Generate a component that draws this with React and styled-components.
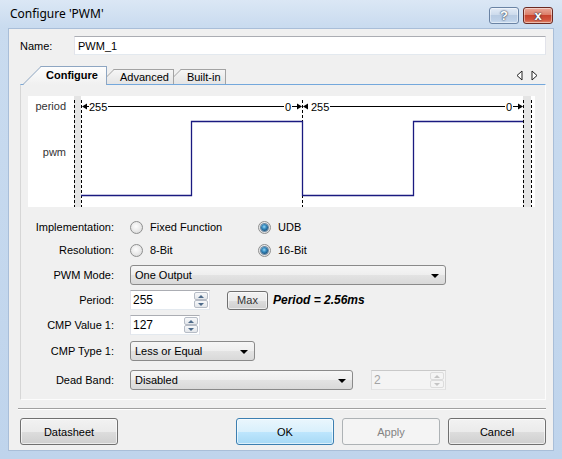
import React from 'react';
import styled, { createGlobalStyle } from 'styled-components';

const GlobalStyle = createGlobalStyle`
  html, body {
    margin: 0;
    padding: 0;
  }
  body {
    width: 562px;
    height: 459px;
    overflow: hidden;
    font-family: "Liberation Sans", Arial, sans-serif;
    font-size: 11px;
    color: #000;
  }
  * {
    box-sizing: border-box;
  }
`;

const Window = styled.div`
  width: 562px;
  height: 459px;
  display: flex;
  flex-direction: column;
  padding: 0 8px 8px;
  background: linear-gradient(to bottom, #dbe7f5 0px, #c9dbef 27px, #bfd4ec 100%);
`;

const TitleBar = styled.div`
  height: 28px;
  display: flex;
  align-items: flex-start;
  flex: none;
`;

const Title = styled.div`
  margin: 6px 0 0 2px;
  font-family: "Noto Sans", "Open Sans", sans-serif;
  font-size: 12px;
  line-height: 16px;
  color: #000;
`;

const CaptionButtons = styled.div`
  margin: 7px 1px 0 auto;
  display: flex;
  gap: 4px;
`;

const CaptionButton = styled.div`
  width: 30px;
  height: 17px;
  border-radius: 3px;
  display: flex;
  align-items: center;
  justify-content: center;
  font-family: "Liberation Sans", Arial, sans-serif;
  font-weight: 700;
  font-size: 13px;
  color: #fff;
  border: 1px solid ${p => (p.$close ? '#6b2a22' : '#6a83a4')};
  box-shadow: inset 0 0 0 1px rgba(255, 255, 255, 0.45);
  background: ${p =>
    p.$close
      ? 'linear-gradient(to bottom, #e9a99a 0%, #dc7e69 45%, #c8432d 50%, #d2563f 80%, #e08b6f 100%)'
      : 'linear-gradient(to bottom, #e3ebf6 0%, #cddbec 45%, #b8cbe2 50%, #bdd0e7 80%, #cadcf0 100%)'};
  text-shadow: 0 0 2px #2a3a50, 0 0 1px #2a3a50;
`;

const Client = styled.div`
  flex: 1;
  display: flex;
  flex-direction: column;
  background: #f0f0f0;
  border: 1px solid #a9bed8;
  padding: 7px 7px 5px 11px;
`;

const NameRow = styled.div`
  display: flex;
  align-items: center;
  height: 19px;
`;

const NameLabel = styled.div`
  width: 54px;
`;

const TextBox = styled.div`
  flex: 1;
  height: 19px;
  background: #fff;
  border: 1px solid;
  border-color: #abadb3 #e2e3ea #e3e9ef #e2e3ea;
  padding: 0 3px;
  display: flex;
  align-items: center;
  font-size: 11px;
`;

const TabStrip = styled.div`
  position: relative;
  z-index: 1;
  margin-top: 11px;
  height: 18px;
  display: flex;
  align-items: flex-end;
  padding-left: 2px;
`;

const Tab = styled.div`
  position: relative;
  height: ${p => (p.$active ? 19 : 15)}px;
  margin-left: ${p => (p.$first ? 0 : -8)}px;
  margin-bottom: ${p => (p.$active ? -1 : 0)}px;
  padding: 0 ${p => p.$pr}px ${p => (p.$active ? 1 : 0)}px ${p => (p.$active ? 24 : 21)}px;
  z-index: ${p => p.$z};
  display: flex;
  align-items: center;
  font-weight: ${p => (p.$active ? 700 : 400)};

  &::before,
  &::after {
    content: '';
    position: absolute;
    top: 0;
    bottom: 0;
    background: ${p =>
      p.$active
        ? 'linear-gradient(to bottom, #fdfdfd, #f0f0f0)'
        : 'linear-gradient(to bottom, #f6f6f6, #e4e4e4)'};
    border-top: 1px solid ${p => (p.$active ? '#8ea6c2' : '#a3a3a3')};
  }

  &::before {
    left: 0;
    width: ${p => (p.$active ? 22 : 18)}px;
    transform: skewX(-45deg);
    transform-origin: bottom left;
    border-left: 1px solid ${p => (p.$active ? '#8ea6c2' : '#a3a3a3')};
  }

  &::after {
    left: ${p => (p.$active ? 19 : 15)}px;
    right: 0;
    border-right: 1px solid ${p => (p.$active ? '#8ea6c2' : '#a3a3a3')};
  }

  span {
    position: relative;
    z-index: 1;
  }
`;

const TabArrows = styled.div`
  margin: 0 8px 0 auto;
  align-self: center;
  display: flex;
  gap: 8px;
`;

const Panel = styled.div`
  height: 316px;
  border: 1px solid;
  border-color: #74a8dc #fcfcfc #fcfcfc #d6d6d6;
  padding: 11px 10px 0 7px;
  display: flex;
  flex-direction: column;
`;

const WaveBox = styled.div`
  width: 507px;
  height: 111px;
  background: #fff;
  flex: none;
`;

const Form = styled.div`
  margin-top: 11px;
  display: flex;
  flex-direction: column;
`;

const Row = styled.div`
  display: grid;
  grid-template-columns: 86px 1fr;
  column-gap: 16px;
  align-items: center;
  height: ${p => p.$h}px;
  margin-top: ${p => p.$mt || 0}px;
`;

const Label = styled.div`
  text-align: right;
  white-space: nowrap;
`;

const Controls = styled.div`
  display: flex;
  align-items: center;
  height: 100%;
`;

const RadioOption = styled.div`
  display: flex;
  align-items: center;
  gap: 7px;
  width: ${p => p.$w}px;
`;

const RadioDot = styled.span`
  flex: none;
  width: 13px;
  height: 13px;
  border-radius: 50%;
  border: 1px solid #8e8f8f;
  background: radial-gradient(circle at 45% 40%, #fdfdfd 0%, #ececec 45%, #d2d2d2 100%);
  display: flex;
  align-items: center;
  justify-content: center;

  &::after {
    content: '';
    display: ${p => (p.$on ? 'block' : 'none')};
    width: 7px;
    height: 7px;
    border-radius: 50%;
    background: radial-gradient(circle at 45% 40%, #9ad8f3 0%, #3a8fc4 35%, #17507c 75%, #1c3d5c 100%);
    box-shadow: 0 0 0 1px #6e8aa3;
  }
`;

const Combo = styled.div`
  position: relative;
  width: ${p => p.$w}px;
  height: 20px;
  border: 1px solid #8a8a8a;
  border-radius: 3px;
  background: linear-gradient(to bottom, #f6f6f6 0%, #eeeeee 50%, #e3e3e3 51%, #d9d9d9 100%);
  padding: 0 20px 0 4px;
  display: flex;
  align-items: center;

  &::after {
    content: '';
    position: absolute;
    right: 6px;
    top: 50%;
    margin-top: -1px;
    border-left: 4px solid transparent;
    border-right: 4px solid transparent;
    border-top: 4px solid #000;
  }
`;

const SpinBox = styled.div`
  width: ${p => p.$w}px;
  height: 20px;
  display: flex;
  background: ${p => (p.$disabled ? '#f4f4f4' : '#fff')};
  border: 1px solid;
  border-color: ${p => (p.$disabled ? '#c9c9c9 #dedede #e3e3e3 #dedede' : '#abadb3 #e2e3ea #e3e9ef #e2e3ea')};
  margin-left: ${p => p.$ml || 0}px;
  color: ${p => (p.$disabled ? '#a3a3a3' : '#000')};
`;

const SpinValue = styled.div`
  flex: 1;
  padding: 1px 0 0 2px;
  line-height: 16px;
  font-size: 12px;
`;

const SpinButtons = styled.div`
  width: 15px;
  display: flex;
  flex-direction: column;
  padding: 1px 1px 1px 0;
`;

const SpinButton = styled.div`
  flex: 1;
  display: flex;
  align-items: center;
  justify-content: center;
  border: 1px solid ${p => (p.$disabled ? '#dcdcdc' : '#b6bcc6')};
  border-radius: 2px;
  background: ${p => (p.$disabled ? '#f4f4f4' : 'linear-gradient(to bottom, #f7f8fa, #e3e6ea)')};

  &::after {
    content: '';
    border-left: 3px solid transparent;
    border-right: 3px solid transparent;
    ${p =>
      p.$up
        ? `border-bottom: 3px solid ${p.$disabled ? '#c4c4c4' : '#4d6a8a'};`
        : `border-top: 3px solid ${p.$disabled ? '#c4c4c4' : '#4d6a8a'};`}
  }
`;

const SmallButton = styled.div`
  margin-left: 17px;
  width: 41px;
  height: 19px;
  border: 1px solid #707070;
  border-radius: 3px;
  background: linear-gradient(to bottom, #f2f2f2 0%, #ebebeb 50%, #dddddd 51%, #cfcfcf 100%);
  box-shadow: inset 0 0 0 1px rgba(255, 255, 255, 0.6);
  display: flex;
  align-items: center;
  justify-content: center;
  color: #333;
`;

const PeriodText = styled.div`
  margin-left: 5px;
  font-size: 12px;
  font-weight: 700;
  font-style: italic;
  white-space: nowrap;
`;

const Separator = styled.div`
  margin: 8px 0 0 -2px;
  height: 2px;
  border-top: 1px solid #a0a0a0;
  border-bottom: 1px solid #ffffff;
`;

const ButtonBar = styled.div`
  margin-top: 8px;
  display: flex;
  gap: 8px;
`;

const Button = styled.div`
  width: 98px;
  height: 27px;
  margin-left: ${p => (p.$push ? 'auto' : '0')};
  border: 1px solid ${p => (p.$primary ? '#3c7fb1' : p.$disabled ? '#adb2b5' : '#707070')};
  border-radius: 3px;
  display: flex;
  align-items: center;
  justify-content: center;
  color: ${p => (p.$disabled ? '#838383' : '#000')};
  box-shadow: inset 0 0 0 1px ${p => (p.$disabled ? 'transparent' : 'rgba(255, 255, 255, 0.6)')};
  background: ${p =>
    p.$primary
      ? 'linear-gradient(to bottom, #eaf6fd 0%, #d9f0fc 50%, #bee6fd 51%, #a7d9f5 100%)'
      : p.$disabled
      ? '#f4f4f4'
      : 'linear-gradient(to bottom, #f2f2f2 0%, #ebebeb 50%, #dddddd 51%, #cfcfcf 100%)'};
`;

const Arrow = ({ right }) => (
  <svg width="7" height="11" viewBox="0 0 7 11">
    <polygon
      points={right ? '1,1 6,5.5 1,10' : '6,1 1,5.5 6,10'}
      fill="#fff"
      stroke="#222"
      strokeWidth="1"
    />
  </svg>
);

const Waveform = () => (
  <svg width="507" height="111" viewBox="0 0 507 111" fontFamily="Liberation Sans, Arial, sans-serif" fontSize="11">
    <rect x="46" y="0" width="7" height="111" fill="#e4e4e4" />
    <rect x="495" y="0" width="8" height="111" fill="#e4e4e4" />
    <g stroke="#000" strokeWidth="1" strokeDasharray="3 2">
      <line x1="46.5" y1="4" x2="46.5" y2="111" />
      <line x1="53.5" y1="4" x2="53.5" y2="111" />
      <line x1="274.5" y1="4" x2="274.5" y2="111" />
      <line x1="495.5" y1="4" x2="495.5" y2="111" />
      <line x1="503.5" y1="4" x2="503.5" y2="111" />
    </g>
    <text x="38" y="14" textAnchor="end" fill="#333">period</text>
    <text x="38" y="60" textAnchor="end" fill="#333">pwm</text>

    <g fill="#000">
      <polygon points="54,10.5 59,7.5 59,13.5" />
      <polygon points="274,10.5 269,7.5 269,13.5" />
      <polygon points="275,10.5 280,7.5 280,13.5" />
      <polygon points="495,10.5 490,7.5 490,13.5" />
      <text x="61" y="14.5">255</text>
      <text x="260" y="14.5" textAnchor="middle">0</text>
      <text x="283" y="14.5">255</text>
      <text x="481" y="14.5" textAnchor="middle">0</text>
    </g>
    <g stroke="#000" strokeWidth="1">
      <line x1="58" y1="10.5" x2="61" y2="10.5" />
      <line x1="80" y1="10.5" x2="256" y2="10.5" />
      <line x1="264" y1="10.5" x2="269" y2="10.5" />
      <line x1="302" y1="10.5" x2="477" y2="10.5" />
      <line x1="485" y1="10.5" x2="490" y2="10.5" />
    </g>

    <path
      d="M53 99.5 H163.5 V25.5 H274.5 V99.5 H385.5 V25.5 H495"
      fill="none"
      stroke="#1a1a80"
      strokeWidth="1.3"
    />
  </svg>
);

const Spinner = ({ value, w, ml, disabled }) => (
  <SpinBox $w={w} $ml={ml} $disabled={disabled}>
    <SpinValue>{value}</SpinValue>
    <SpinButtons>
      <SpinButton $up $disabled={disabled} />
      <SpinButton $disabled={disabled} />
    </SpinButtons>
  </SpinBox>
);

const Radio = ({ label, on, w }) => (
  <RadioOption $w={w}>
    <RadioDot $on={on} />
    <span>{label}</span>
  </RadioOption>
);

export default function App() {
  return (
    <>
      <GlobalStyle />
      <Window>
        <TitleBar>
          <Title>Configure 'PWM'</Title>
          <CaptionButtons>
            <CaptionButton>?</CaptionButton>
            <CaptionButton $close>x</CaptionButton>
          </CaptionButtons>
        </TitleBar>

        <Client>
          <NameRow>
            <NameLabel>Name:</NameLabel>
            <TextBox>PWM_1</TextBox>
          </NameRow>

          <TabStrip>
            <Tab $active $first $z={3} $pr={9}>
              <span>Configure</span>
            </Tab>
            <Tab $z={2} $pr={5}>
              <span>Advanced</span>
            </Tab>
            <Tab $z={1} $pr={5}>
              <span>Built-in</span>
            </Tab>
            <TabArrows>
              <Arrow />
              <Arrow right />
            </TabArrows>
          </TabStrip>

          <Panel>
            <WaveBox>
              <Waveform />
            </WaveBox>

            <Form>
              <Row $h={18}>
                <Label>Implementation:</Label>
                <Controls>
                  <Radio label="Fixed Function" w={128} />
                  <Radio label="UDB" on />
                </Controls>
              </Row>
              <Row $h={18} $mt={5}>
                <Label>Resolution:</Label>
                <Controls>
                  <Radio label="8-Bit" w={128} />
                  <Radio label="16-Bit" on />
                </Controls>
              </Row>
              <Row $h={20} $mt={6}>
                <Label>PWM Mode:</Label>
                <Controls>
                  <Combo $w={316}>One Output</Combo>
                </Controls>
              </Row>
              <Row $h={20} $mt={5}>
                <Label>Period:</Label>
                <Controls>
                  <Spinner value="255" w={80} />
                  <SmallButton>Max</SmallButton>
                  <PeriodText>Period = 2.56ms</PeriodText>
                </Controls>
              </Row>
              <Row $h={20} $mt={5}>
                <Label>CMP Value 1:</Label>
                <Controls>
                  <Spinner value="127" w={70} />
                </Controls>
              </Row>
              <Row $h={20} $mt={6}>
                <Label>CMP Type 1:</Label>
                <Controls>
                  <Combo $w={125}>Less or Equal</Combo>
                </Controls>
              </Row>
              <Row $h={20} $mt={9}>
                <Label>Dead Band:</Label>
                <Controls>
                  <Combo $w={223}>Disabled</Combo>
                  <Spinner value="2" w={75} ml={18} disabled />
                </Controls>
              </Row>
            </Form>
          </Panel>

          <Separator />

          <ButtonBar>
            <Button>Datasheet</Button>
            <Button $push $primary>OK</Button>
            <Button $disabled>Apply</Button>
            <Button>Cancel</Button>
          </ButtonBar>
        </Client>
      </Window>
    </>
  );
}
